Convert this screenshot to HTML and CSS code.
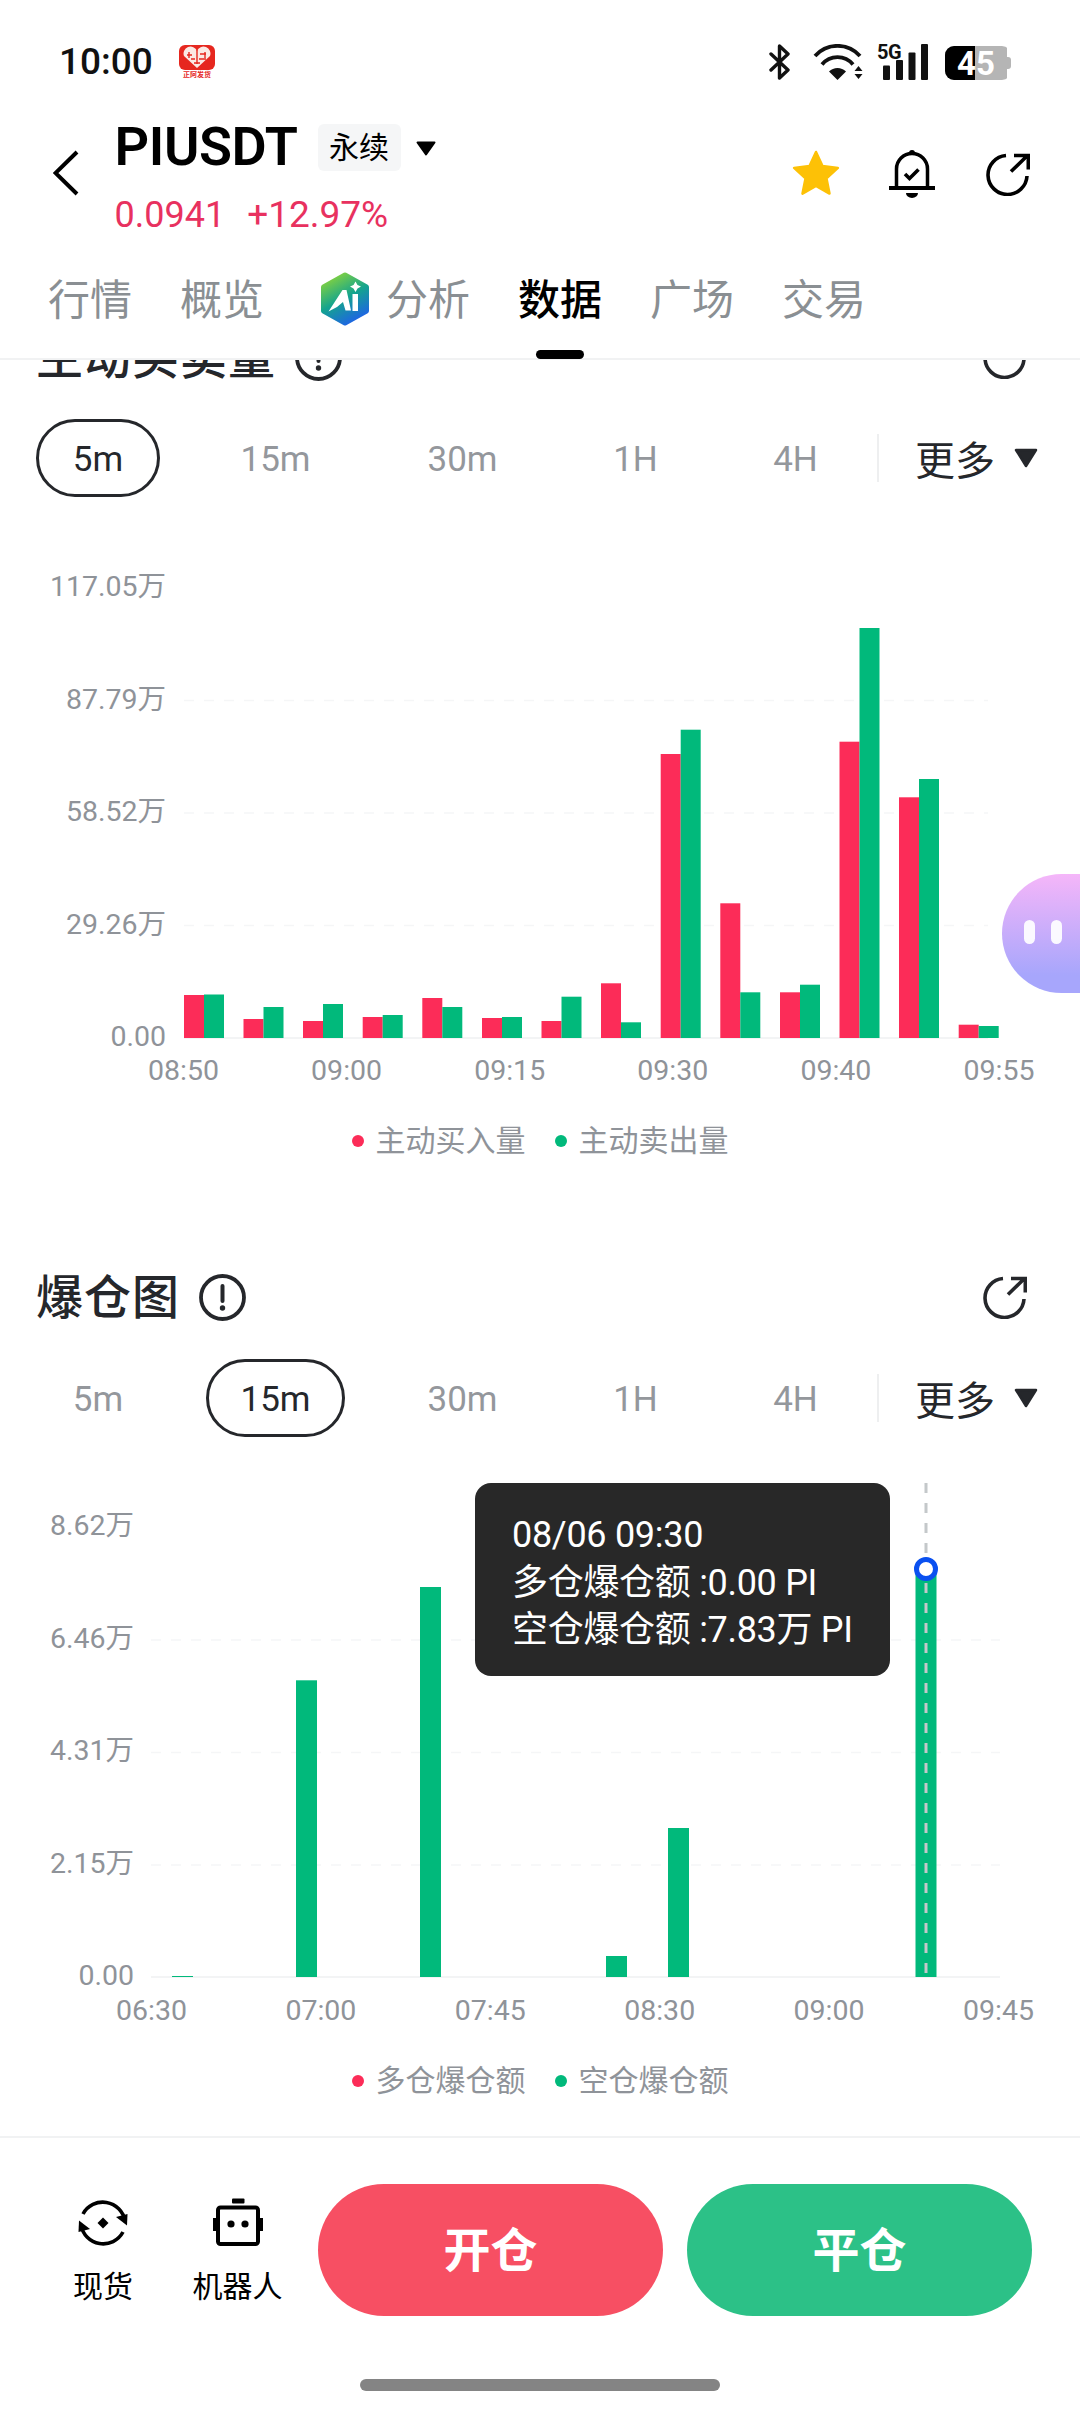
FILE: index.html
```html
<!DOCTYPE html>
<html lang="zh">
<head>
<meta charset="utf-8">
<title>PIUSDT 数据</title>
<link rel="stylesheet" href="styles.css">
</head>
<body>
<div class="app">
  <header class="top">
    <div class="status">
      <span class="clock">10:00</span>
      <svg class="pdd" width="36" height="33" viewBox="0 0 36 33">
        <rect x="0" y="0" width="36" height="25" rx="6" fill="#e6271f"/>
        <path d="M18 23 L5 11 A6.8 6.8 0 0 1 18 6 A6.8 6.8 0 0 1 31 11 Z" fill="#fbe9e4"/>
        <path d="M8 10h5M12 14h4M21 9h6M20 14h7M15 18h6M18 5v14M10 7v6M26 7v6" stroke="#e6271f" stroke-width="1.4" fill="none"/>
        <text class="pdd-text" x="18" y="32">正阿发货</text>
      </svg>
      <div class="status-right">
        <svg width="21" height="36" viewBox="0 0 21 36"><path d="M2 10 L19 26 L10.5 34 V2 L19 10 L2 26" fill="none" stroke="#111" stroke-width="3.4" stroke-linejoin="round" stroke-linecap="round"/></svg>
        <svg class="wifi" width="50" height="36" viewBox="0 0 50 36">
          <path d="M2 12 A30 30 0 0 1 47 12" fill="none" stroke="#111" stroke-width="3.8"/>
          <path d="M9 20.5 A20 20 0 0 1 40 20.5" fill="none" stroke="#111" stroke-width="3.8"/>
          <path d="M16 27.5 L24.5 36 L33 27.5 A12 12 0 0 0 16 27.5 Z" fill="#111"/>
          <path d="M41.5 27 L45.5 22 L49.5 27 Z M41.5 30 L45.5 35 L49.5 30 Z" fill="#111"/>
        </svg>
        <div class="signal">
          <span class="five-g">5G</span>
          <svg width="45" height="36" viewBox="0 0 45 36">
            <rect x="0" y="21.5" width="7" height="14.5" rx="1" fill="#111"/>
            <rect x="13" y="16" width="7" height="20" rx="1" fill="#111"/>
            <rect x="25.500" y="8.500" width="7" height="27.500" rx="1" fill="#111"/>
            <rect x="38" y="0" width="7" height="36" rx="1" fill="#111"/>
          </svg>
        </div>
        <div class="battery">
          <span class="battery-fill"></span>
          <span class="battery-num">45</span>
        </div>
      </div>
    </div>

    <div class="titlebar">
      <svg class="back" width="26" height="46" viewBox="0 0 26 46"><path d="M24 2 L2.500 23 L24 44" fill="none" stroke="#000" stroke-width="4"/></svg>
      <div class="symbol">
        <div class="symbol-row">
          <span class="pair">PIUSDT</span>
          <span class="badge">永续</span>
          <svg width="20" height="15" viewBox="0 0 20 15"><path d="M1.500 1.500 H18.500 L10 13.500 Z" fill="#000" stroke="#000" stroke-width="2" stroke-linejoin="round"/></svg>
        </div>
        <div class="quote"><span>0.0941</span><span class="pct">+12.97%</span></div>
      </div>
      <div class="actions">
        <svg width="50" height="48" viewBox="0 0 50 48"><path d="M25 2 L31.500 16.100 L46.900 17.900 L35.500 28.400 L38.500 43.600 L25 36 L11.500 43.600 L14.500 28.400 L3.100 17.900 L18.500 16.100 Z" fill="#fdc106" stroke="#fdc106" stroke-width="2.500" stroke-linejoin="round"/></svg>
        <svg class="bell" width="46" height="50" viewBox="0 0 46 50">
          <path d="M7.500 39 V20 A15.500 15.500 0 0 1 38.500 20 V39" fill="none" stroke="#000" stroke-width="3.500"/>
          <path d="M0 39 H46" stroke="#000" stroke-width="4"/>
          <path d="M20 4 A3 3 0 0 1 26 4 Z" fill="#000"/>
          <path d="M17 44 H29 A6 5 0 0 1 17 44 Z" fill="#000"/>
          <path d="M16 25 L20.500 29.500 L29.500 20.500" fill="none" stroke="#000" stroke-width="3.600"/>
        </svg>
        <svg class="share" width="44" height="44" viewBox="0 0 44 44"><use href="#i-share"/></svg>
      </div>
    </div>

    <nav class="tabs">
      <span class="tab">行情</span>
      <span class="tab">概览</span>
      <span class="tab tab-ai">
        <svg width="50" height="54" viewBox="0 0 50 54">
          <defs><linearGradient id="aigrad" x1="0.2" y1="0" x2="0.7" y2="1"><stop offset="0" stop-color="#86d33c"/><stop offset="0.5" stop-color="#14a48e"/><stop offset="1" stop-color="#1e63e6"/></linearGradient></defs>
          <path d="M25 3 L46.500 15 V39 L25 51 L3.500 39 V15 Z" fill="url(#aigrad)" stroke="url(#aigrad)" stroke-width="5" stroke-linejoin="round"/>
          <path d="M8.500 39.500 L22.500 18 H26.500 L31 38.500 H25.500 L23 30 L17 35 Z" fill="#fff"/>
          <rect x="32.500" y="22" width="5.500" height="17" fill="#fff"/>
          <path d="M35.500 9.500 L37.500 13 L41 14.500 L37.500 16.500 L35.500 20 L33.500 16.500 L30 14.500 L33.500 13 Z" fill="#fff"/>
        </svg>
        分析
      </span>
      <span class="tab tab-on">数据</span>
      <span class="tab">广场</span>
      <span class="tab">交易</span>
    </nav>
  </header>

  <main class="scroll">
    <svg class="sprite" width="0" height="0">
      <symbol id="i-share" viewBox="0 0 44 44">
        <path d="M20 3.500 A19.500 19.500 0 1 0 41 24" fill="none" stroke="currentColor" stroke-width="3.600"/>
        <path d="M25 19.500 L41 4 M28 3.500 H42.300 V17.500" fill="none" stroke="currentColor" stroke-width="3.600"/>
      </symbol>
      <symbol id="i-info" viewBox="0 0 47 47">
        <circle cx="23.500" cy="23.500" r="21.500" fill="none" stroke="currentColor" stroke-width="3.800"/>
        <path d="M23.500 12 V27" stroke="currentColor" stroke-width="4" stroke-linecap="round"/>
        <circle cx="23.500" cy="34" r="2.700" fill="currentColor"/>
      </symbol>
      <symbol id="i-caret" viewBox="0 0 24 20">
        <path d="M2 2 H22 L12 18 Z" fill="currentColor" stroke="currentColor" stroke-width="2.500" stroke-linejoin="round"/>
      </symbol>
    </svg>
    <div class="scroll-inner">
      <section class="card">
        <div class="card-head">
          <div class="card-title"><h2>主动买卖量</h2><svg class="info" width="47" height="47"><use href="#i-info"/></svg></div>
          <svg class="ink" width="44" height="44"><use href="#i-share"/></svg>
        </div>
        <div class="periods">
          <span class="period period-on">5m</span>
          <span class="period">15m</span>
          <span class="period">30m</span>
          <span class="period">1H</span>
          <span class="period">4H</span>
          <span class="period-sep"></span>
          <span class="more">更多<svg width="24" height="20"><use href="#i-caret"/></svg></span>
        </div>
        <div class="plot plot-a">
          <div class="yaxis">
            <span>117.05万</span><span>87.79万</span><span>58.52万</span><span>29.26万</span><span>0.00</span>
          </div>
          <svg class="canvas" width="914" height="490" viewBox="166 567 914 490">
            <path class="grid" d="M184 700.500 H988 M184 813 H988 M184 925.500 H988"/>
            <path class="base" d="M184 1038 H988"/>
            <g class="red">
              <rect x="184" y="995" width="20" height="43"/>
              <rect x="243.500" y="1019" width="20" height="19"/>
              <rect x="303" y="1021" width="20" height="17"/>
              <rect x="362.700" y="1017" width="20" height="21"/>
              <rect x="422.300" y="998" width="20" height="40"/>
              <rect x="482" y="1018" width="20" height="20"/>
              <rect x="541.500" y="1021" width="20" height="17"/>
              <rect x="601" y="983.300" width="20" height="54.700"/>
              <rect x="660.700" y="754" width="20" height="284"/>
              <rect x="720.300" y="903.300" width="20" height="134.700"/>
              <rect x="780" y="992.300" width="20" height="45.700"/>
              <rect x="839.500" y="741.700" width="20" height="296.300"/>
              <rect x="899" y="797.300" width="20" height="240.700"/>
              <rect x="958.700" y="1024.700" width="20" height="13.300"/>
            </g>
            <g class="green">
              <rect x="204" y="994.500" width="20" height="43.500"/>
              <rect x="263.500" y="1007" width="20" height="31"/>
              <rect x="323" y="1004" width="20" height="34"/>
              <rect x="382.700" y="1015" width="20" height="23"/>
              <rect x="442.300" y="1007" width="20" height="31"/>
              <rect x="502" y="1017" width="20" height="21"/>
              <rect x="561.500" y="996.700" width="20" height="41.300"/>
              <rect x="621" y="1022.300" width="20" height="15.700"/>
              <rect x="680.700" y="729.700" width="20" height="308.300"/>
              <rect x="740.300" y="992.300" width="20" height="45.700"/>
              <rect x="800" y="984.700" width="20" height="53.300"/>
              <rect x="859.500" y="628" width="20" height="410"/>
              <rect x="919" y="779" width="20" height="259"/>
              <rect x="978.700" y="1026" width="20" height="12"/>
            </g>
          </svg>
        </div>
        <div class="xaxis xaxis-a"><span>08:50</span><span>09:00</span><span>09:15</span><span>09:30</span><span>09:40</span><span>09:55</span></div>
        <div class="legend">
          <span class="legend-item"><i class="dot dot-red"></i>主动买入量</span>
          <span class="legend-item"><i class="dot dot-green"></i>主动卖出量</span>
        </div>
      </section>

      <section class="card card-b">
        <div class="card-head">
          <div class="card-title"><h2>爆仓图</h2><svg class="info" width="47" height="47"><use href="#i-info"/></svg></div>
          <svg class="ink" width="44" height="44"><use href="#i-share"/></svg>
        </div>
        <div class="periods">
          <span class="period">5m</span>
          <span class="period period-on">15m</span>
          <span class="period">30m</span>
          <span class="period">1H</span>
          <span class="period">4H</span>
          <span class="period-sep"></span>
          <span class="more">更多<svg width="24" height="20"><use href="#i-caret"/></svg></span>
        </div>
        <div class="plot plot-b">
          <div class="yaxis">
            <span>8.62万</span><span>6.46万</span><span>4.31万</span><span>2.15万</span><span>0.00</span>
          </div>
          <svg class="canvas" width="946" height="490" viewBox="134 1506 946 490">
            <path class="grid" d="M151 1640 H1000 M151 1752.500 H1000 M151 1865 H1000"/>
            <path class="base" d="M151 1977 H1000"/>
            <g class="green">
              <rect x="172" y="1976" width="21" height="1"/>
              <rect x="296" y="1680.300" width="21" height="296.700"/>
              <rect x="420" y="1587" width="21" height="390"/>
              <rect x="606" y="1956" width="21" height="21"/>
              <rect x="668" y="1828" width="21" height="149"/>
              <rect x="915.500" y="1570" width="21" height="407"/>
            </g>
            <path class="cursor" d="M926 1483 V1977"/>
            <circle class="marker" cx="926" cy="1569" r="9.500"/>
          </svg>
          <div class="tooltip">
            <div>08/06 09:30</div>
            <div>多仓爆仓额 :0.00 PI</div>
            <div>空仓爆仓额 :7.83万 PI</div>
          </div>
        </div>
        <div class="xaxis xaxis-b"><span>06:30</span><span>07:00</span><span>07:45</span><span>08:30</span><span>09:00</span><span>09:45</span></div>
        <div class="legend">
          <span class="legend-item"><i class="dot dot-red"></i>多仓爆仓额</span>
          <span class="legend-item"><i class="dot dot-green"></i>空仓爆仓额</span>
        </div>
      </section>
    </div>
    <div class="bot"><i></i><i></i></div>
  </main>

  <footer class="bottom">
    <div class="bottom-row">
      <div class="tool">
        <svg width="50" height="50" viewBox="0 0 50 50">
          <path d="M5 16 A22.500 22.500 0 0 1 47 23" fill="none" stroke="#000" stroke-width="3.600"/>
          <path d="M38 19 L49 27.500 L49.500 16 Z" fill="#000"/>
          <path d="M45 34 A22.500 22.500 0 0 1 3 27" fill="none" stroke="#000" stroke-width="3.600"/>
          <path d="M12 31 L1 22.500 L0.500 34 Z" fill="#000"/>
          <path d="M25 19.500 L30.500 25 L25 30.500 L19.500 25 Z" fill="#000"/>
        </svg>
        <span>现货</span>
      </div>
      <div class="tool tool-bot">
        <svg width="50" height="48" viewBox="0 0 50 48">
          <rect x="19" y="0.500" width="12.500" height="5" rx="1" fill="#000"/>
          <rect x="5" y="9.500" width="40" height="36.500" rx="2.500" fill="#fff" stroke="#000" stroke-width="4"/>
          <rect x="0" y="20" width="3.500" height="13" fill="#000"/>
          <rect x="46.500" y="20" width="3.500" height="13" fill="#000"/>
          <circle cx="18" cy="26" r="3.600" fill="#000"/>
          <circle cx="32" cy="26" r="3.600" fill="#000"/>
        </svg>
        <span>机器人</span>
      </div>
      <button class="cta cta-open">开仓</button>
      <button class="cta cta-close">平仓</button>
    </div>
    <div class="home"></div>
  </footer>
</div>
</body>
</html>
```

FILE: styles.css
```css
* { box-sizing: border-box; }
html, body { margin: 0; padding: 0; background: #fff; }
body { font-family: Roboto, "Noto Sans CJK SC", sans-serif; color: #000; }

.app { width: 1080px; height: 2412px; display: flex; flex-direction: column; overflow: hidden; background: #fff; }

/* header */
.top { flex: none; height: 360px; border-bottom: 2px solid #f1f2f3; display: flex; flex-direction: column; }
.status { height: 120px; display: flex; align-items: flex-start; padding: 43px 69px 0 59px; }
.clock { font-size: 37px; line-height: 37px; font-weight: 500; color: #111; }
.pdd { margin: 2px 0 0 26px; }
.pdd-text { font-size: 7px; fill: #e6271f; text-anchor: middle; font-weight: 700; }
.status-right { margin-left: auto; display: flex; align-items: flex-start; height: 37px; margin-top: 1px; }
.wifi { margin-left: 23px; }
.signal { position: relative; width: 51px; margin-left: 14px; display: flex; justify-content: flex-end; }
.five-g { position: absolute; left: 0; top: -2px; font-size: 20px; line-height: 20px; font-weight: 700; color: #111; letter-spacing: -0.5px; transform: scaleY(1.05); }
.battery { position: relative; width: 66px; height: 34px; margin: 2px 0 0 17px; background: linear-gradient(#b5b5b5, #b5b5b5) 0 0 / 62px 34px no-repeat; border-radius: 9px; }
.battery::after { content: ""; position: absolute; right: 0; top: 11px; width: 4px; height: 12px; background: #b5b5b5; border-radius: 0 3px 3px 0; }
.battery-fill { position: absolute; left: 0; top: 0; width: 30px; height: 34px; background: #000; border-radius: 9px 0 0 9px; }
.battery-num { position: absolute; left: 12px; top: 0; width: 38px; text-align: center; font-size: 33px; line-height: 36px; font-weight: 700; color: #fff; }

.titlebar { height: 130px; display: flex; align-items: flex-start; }
.back { margin: 30px 0 0 53px; }
.symbol { margin-left: 35.5px; }
.symbol-row { display: flex; align-items: center; height: 54px; }
.pair { font-size: 54px; line-height: 54px; font-weight: 600; letter-spacing: -0.4px; color: #000; }
.badge { margin-left: 20px; width: 83px; height: 47px; background: #f5f6f7; border-radius: 6px; text-align: center; font-size: 30px; line-height: 47px; color: #000; }
.symbol-row svg { margin: 3px 0 0 15px; }
.quote { display: flex; margin-top: 20.5px; font-size: 36px; line-height: 40px; color: #e8315f; }
.pct { margin-left: 22px; font-size: 37px; }
.actions { margin-left: auto; display: flex; align-items: center; height: 50px; margin-top: 29px; padding-right: 50px; }
.bell { margin-left: 48px; }
.share { margin-left: 51px; color: #000; }

.tabs { position: relative; height: 108px; display: flex; gap: 48px; padding-left: 48px; font-size: 42px; line-height: 58px; color: #8a8f93; }
.tab { height: 58px; margin-top: 22px; white-space: nowrap; }
.tab-ai { display: flex; align-items: center; }
.tab-ai svg { margin: -4px 16px 0 8px; }
.tab-on { position: relative; color: #000; font-weight: 500; }
.tab-on::after { content: ""; position: absolute; left: 18px; top: 78px; width: 48px; height: 9px; background: #000; border-radius: 5px; }

/* scrolling body */
.scroll { position: relative; flex: 1; min-height: 0; overflow: hidden; }
.sprite { position: absolute; }
.scroll-inner { margin-top: -33px; }
.card-b { margin-top: 106px; }
.card-head { display: flex; justify-content: space-between; align-items: center; height: 60px; padding: 0 53px 0 36px; }
.card-title { display: flex; align-items: center; gap: 19px; }
.card-title h2 { margin: 2px 0 0; font-size: 47px; line-height: 60px; font-weight: 500; letter-spacing: 1px; color: #25272b; }
.info, .ink { color: #25272b; }
.periods { display: flex; align-items: center; gap: 46px; height: 78px; margin-top: 32px; padding-left: 36px; font-size: 35px; color: #94979c; }
.period { height: 78px; line-height: 76px; text-align: center; border: 3.5px solid transparent; border-radius: 39px; }
.period:nth-child(1) { width: 124px; }
.period:nth-child(2) { width: 139px; }
.period:nth-child(3) { width: 143px; }
.period:nth-child(4) { width: 111px; }
.period:nth-child(5) { width: 117px; }
.period-on { color: #25272b; border-color: #25272b; }
.period-sep { width: 2px; height: 48px; margin-left: -23px; background: #eeeff0; }
.more { display: flex; align-items: center; margin-left: -10px; gap: 19px; font-size: 40px; color: #25272b; }

.plot { position: relative; display: flex; height: 490px; margin-top: 70px; }
.plot-b { margin-top: 69px; }
.yaxis { flex: none; display: flex; flex-direction: column; justify-content: space-between; align-items: flex-end; font-size: 28.5px; line-height: 40px; color: #8f9399; }
.plot-a .yaxis { width: 166px; }
.plot-b .yaxis { width: 134px; }
.canvas { flex: none; display: block; overflow: visible; }
.grid { fill: none; stroke: #f5f6f7; stroke-width: 1.5; stroke-dasharray: 10 10; }
.base { fill: none; stroke: #f3f4f5; stroke-width: 2; }
.red rect { fill: #fc2c58; }
.green rect { fill: #01b97b; }
.cursor { fill: none; stroke: #c4c8ca; stroke-width: 3; stroke-dasharray: 10 10; }
.marker { fill: #fff; stroke: #0a50f0; stroke-width: 5; }

.tooltip { position: absolute; left: 475px; top: -23px; width: 415px; height: 193px; padding: 29px 0 0 37px; background: #282828; border-radius: 16px; color: #fff; font-size: 36px; line-height: 47.5px; letter-spacing: -0.3px; white-space: nowrap; }

.xaxis { display: flex; justify-content: space-between; font-size: 28.5px; line-height: 40px; color: #8f9399; }
.xaxis-a { margin-top: -6px; padding: 0 45.5px 0 148px; }
.xaxis-b { margin-top: -5px; padding: 0 46px 0 116px; }
.legend { display: flex; justify-content: center; gap: 28px; margin-top: 30px; font-size: 30px; line-height: 40px; color: #8f9399; }
.legend-item { display: flex; align-items: center; gap: 12px; }
.dot { width: 12px; height: 12px; border-radius: 50%; }
.dot-red { background: #fc2c58; }
.dot-green { background: #01b97b; margin-left: 1px; }

.bot { position: absolute; right: 0; top: 514px; width: 78px; height: 119px; border-radius: 60px 0 0 60px; background: linear-gradient(#f5b6f9, #a7a6fc 85%); display: flex; gap: 16px; align-items: center; padding: 0 0 4px 22px; }
.bot i { width: 11px; height: 24px; border-radius: 6px; background: #fff; opacity: 0.92; }

/* bottom bar */
.bottom { flex: none; height: 276px; border-top: 2px solid #f1f2f3; }
.bottom-row { display: flex; align-items: flex-start; padding: 46px 48px 0 74px; height: 242px; }
.tool { width: 58px; display: flex; flex-direction: column; align-items: center; margin-top: 14px; font-size: 30px; line-height: 40px; color: #000; white-space: nowrap; }
.tool svg { flex: none; }
.tool span { margin-top: 19px; }
.tool-bot { width: 87px; margin-left: 62px; }
.tool-bot svg { margin-bottom: 2px; }
.cta { width: 345px; height: 132px; padding: 0 0 8px; border: 0; border-radius: 66px; color: #fff; font-family: inherit; font-size: 47px; font-weight: 700; }
.cta-open { margin-left: 37px; background: #f74f63; }
.cta-close { margin-left: 24px; background: #2cc187; }
.home { width: 360px; height: 12px; margin: -1px auto 0; background: #848484; border-radius: 6px; }
```
